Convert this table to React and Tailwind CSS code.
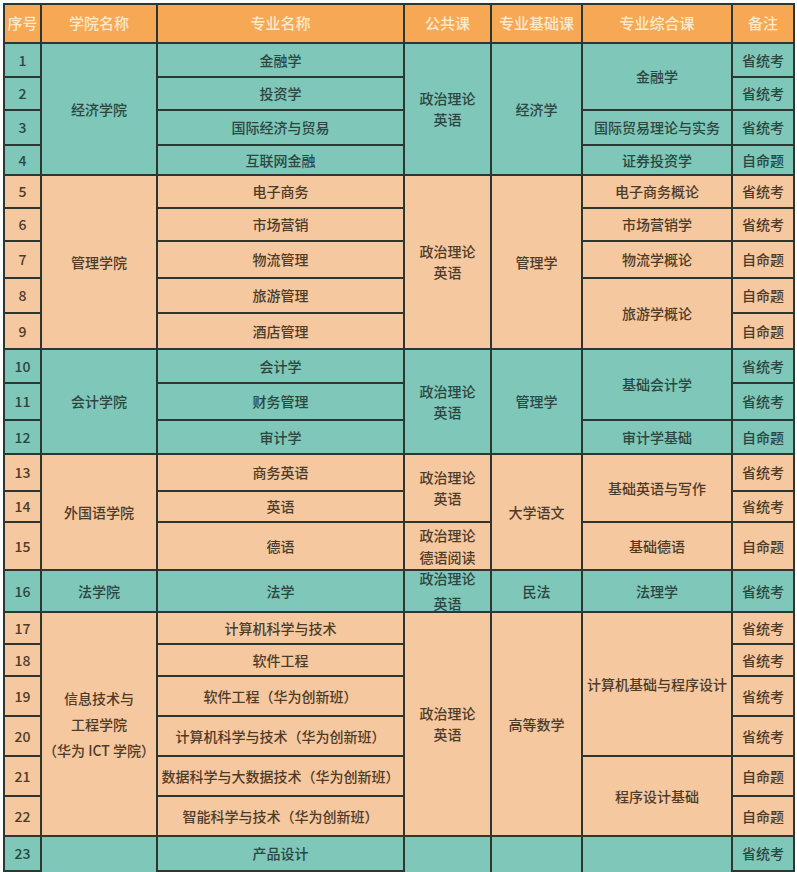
const TEAL = "bg-[#7ec7b9] text-[#2c4640]";
const PEACH = "bg-[#f5c8a0] text-[#4e3b28]";

// grid row classes for data rows 1..24 (header is grid row 1)
const ROWS = [
  "row-start-2", "row-start-3", "row-start-4", "row-start-5", "row-start-6",
  "row-start-7", "row-start-8", "row-start-9", "row-start-10", "row-start-11",
  "row-start-12", "row-start-13", "row-start-14", "row-start-15", "row-start-16",
  "row-start-17", "row-start-18", "row-start-19", "row-start-20", "row-start-21",
  "row-start-22", "row-start-23", "row-start-24", "row-start-25",
];

const rowColor = (n) => {
  if (n <= 4) return TEAL;
  if (n <= 9) return PEACH;
  if (n <= 12) return TEAL;
  if (n <= 15) return PEACH;
  if (n === 16) return TEAL;
  if (n <= 22) return PEACH;
  return TEAL;
};

const majors = [
  "金融学", "投资学", "国际经济与贸易", "互联网金融",
  "电子商务", "市场营销", "物流管理", "旅游管理", "酒店管理",
  "会计学", "财务管理", "审计学",
  "商务英语", "英语", "德语",
  "法学",
  "计算机科学与技术", "软件工程", "软件工程（华为创新班）",
  "计算机科学与技术（华为创新班）", "数据科学与大数据技术（华为创新班）",
  "智能科学与技术（华为创新班）",
  "产品设计", "",
];

const notes = [
  "省统考", "省统考", "省统考", "自命题",
  "省统考", "省统考", "自命题", "自命题", "自命题",
  "省统考", "省统考", "自命题",
  "省统考", "省统考", "自命题",
  "省统考",
  "省统考", "省统考", "省统考", "省统考", "自命题", "自命题",
  "省统考", "",
];

const colleges = [
  { cls: "col-start-2 row-start-2 row-span-4", c: TEAL, t: ["经济学院"] },
  { cls: "col-start-2 row-start-6 row-span-5", c: PEACH, t: ["管理学院"] },
  { cls: "col-start-2 row-start-11 row-span-3", c: TEAL, t: ["会计学院"] },
  { cls: "col-start-2 row-start-14 row-span-3", c: PEACH, t: ["外国语学院"] },
  { cls: "col-start-2 row-start-17", c: TEAL, t: ["法学院"] },
  { cls: "col-start-2 row-start-18 row-span-6 leading-[26px]", c: PEACH, t: ["信息技术与", "工程学院", "（华为 ICT 学院）"] },
  { cls: "col-start-2 row-start-24 row-span-2", c: TEAL, t: [] },

  { cls: "col-start-4 row-start-2 row-span-4 leading-[21px]", c: TEAL, t: ["政治理论", "英语"] },
  { cls: "col-start-4 row-start-6 row-span-5 leading-[21px]", c: PEACH, t: ["政治理论", "英语"] },
  { cls: "col-start-4 row-start-11 row-span-3 leading-[21px]", c: TEAL, t: ["政治理论", "英语"] },
  { cls: "col-start-4 row-start-14 row-span-2 leading-[21px]", c: PEACH, t: ["政治理论", "英语"] },
  { cls: "col-start-4 row-start-16 leading-[22px]", c: PEACH, t: ["政治理论", "德语阅读"] },
  { cls: "col-start-4 row-start-17 leading-[25px]", c: TEAL, t: ["政治理论", "英语"] },
  { cls: "col-start-4 row-start-18 row-span-6 leading-[21px]", c: PEACH, t: ["政治理论", "英语"] },
  { cls: "col-start-4 row-start-24 row-span-2", c: TEAL, t: [] },

  { cls: "col-start-5 row-start-2 row-span-4", c: TEAL, t: ["经济学"] },
  { cls: "col-start-5 row-start-6 row-span-5", c: PEACH, t: ["管理学"] },
  { cls: "col-start-5 row-start-11 row-span-3", c: TEAL, t: ["管理学"] },
  { cls: "col-start-5 row-start-14 row-span-3", c: PEACH, t: ["大学语文"] },
  { cls: "col-start-5 row-start-17", c: TEAL, t: ["民法"] },
  { cls: "col-start-5 row-start-18 row-span-6", c: PEACH, t: ["高等数学"] },
  { cls: "col-start-5 row-start-24 row-span-2", c: TEAL, t: [] },

  { cls: "col-start-6 row-start-2 row-span-2", c: TEAL, t: ["金融学"] },
  { cls: "col-start-6 row-start-4", c: TEAL, t: ["国际贸易理论与实务"] },
  { cls: "col-start-6 row-start-5", c: TEAL, t: ["证券投资学"] },
  { cls: "col-start-6 row-start-6", c: PEACH, t: ["电子商务概论"] },
  { cls: "col-start-6 row-start-7", c: PEACH, t: ["市场营销学"] },
  { cls: "col-start-6 row-start-8", c: PEACH, t: ["物流学概论"] },
  { cls: "col-start-6 row-start-9 row-span-2", c: PEACH, t: ["旅游学概论"] },
  { cls: "col-start-6 row-start-11 row-span-2", c: TEAL, t: ["基础会计学"] },
  { cls: "col-start-6 row-start-13", c: TEAL, t: ["审计学基础"] },
  { cls: "col-start-6 row-start-14 row-span-2", c: PEACH, t: ["基础英语与写作"] },
  { cls: "col-start-6 row-start-16", c: PEACH, t: ["基础德语"] },
  { cls: "col-start-6 row-start-17", c: TEAL, t: ["法理学"] },
  { cls: "col-start-6 row-start-18 row-span-4", c: PEACH, t: ["计算机基础与程序设计"] },
  { cls: "col-start-6 row-start-22 row-span-2", c: PEACH, t: ["程序设计基础"] },
  { cls: "col-start-6 row-start-24 row-span-2", c: TEAL, t: [] },
];

const headers = ["序号", "学院名称", "专业名称", "公共课", "专业基础课", "专业综合课", "备注"];

function Cell({ className, children }) {
  return (
    <div className={`flex flex-col items-center justify-center overflow-hidden text-center whitespace-nowrap ${className}`}>
      {children}
    </div>
  );
}

export default function App() {
  return (
    <div
      className="h-[872px] w-[797px] overflow-hidden bg-white pl-[3px] pt-[3px] text-[14px] font-medium"
      style={{ fontFamily: '"Noto Sans CJK SC", "Noto Sans", sans-serif' }}
    >
      <div className="grid w-fit grid-cols-[35px_114px_245px_85px_89px_148px_60px] grid-rows-[37px_32px_31px_33px_28px_31px_31px_35px_33px_34px_32px_35px_32px_35px_29px_46px_40px_30px_30px_38px_38px_38px_38px_33px_33px] gap-[2px] bg-[#2b3730] p-[2px]">
        {headers.map((h) => (
          <Cell key={h} className="row-start-1 bg-[#f6a855] text-[15px] text-[#fdeacb]">
            {h}
          </Cell>
        ))}

        {ROWS.map((r, i) => (
          <Cell key={`n${i}`} className={`col-start-1 ${r} ${rowColor(i + 1)}`}>
            {i < 23 ? i + 1 : ""}
          </Cell>
        ))}

        {ROWS.map((r, i) => (
          <Cell key={`m${i}`} className={`col-start-3 ${r} ${rowColor(i + 1)}`}>
            {majors[i]}
          </Cell>
        ))}

        {ROWS.map((r, i) => (
          <Cell key={`b${i}`} className={`col-start-7 ${r} ${rowColor(i + 1)}`}>
            {notes[i]}
          </Cell>
        ))}

        {colleges.map((c, i) => (
          <Cell key={`c${i}`} className={`${c.cls} ${c.c}`}>
            {c.t.map((line) => (
              <span key={line}>{line}</span>
            ))}
          </Cell>
        ))}
      </div>
    </div>
  );
}
